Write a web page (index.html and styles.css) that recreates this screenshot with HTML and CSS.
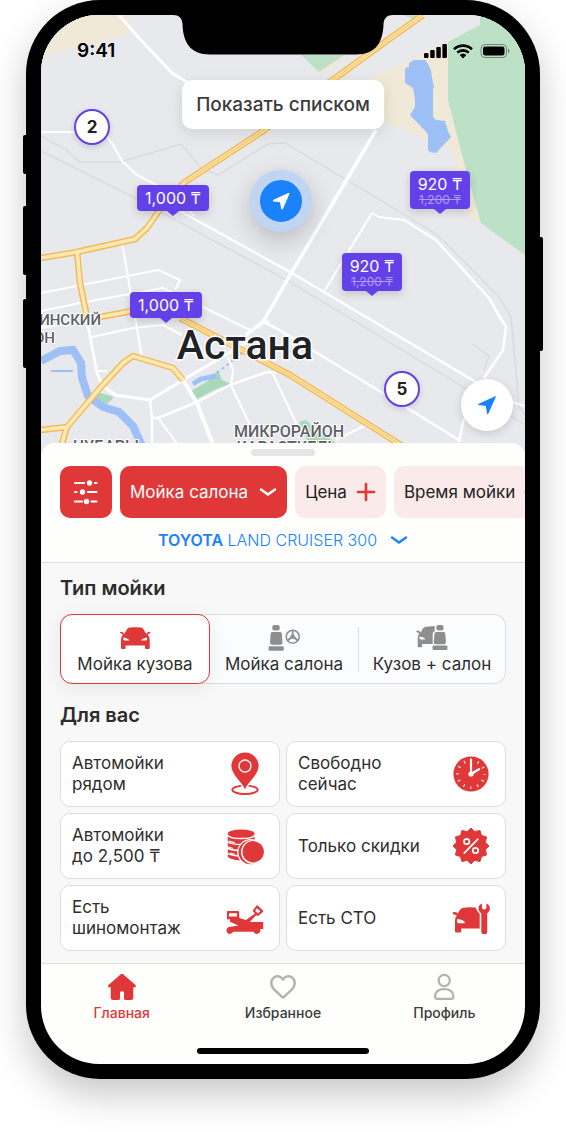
FILE: index.html
```html
<!DOCTYPE html>
<html lang="ru">
<head>
<meta charset="utf-8">
<meta name="viewport" content="width=device-width, initial-scale=1">
<title>Автомойки — Астана</title>
<link rel="stylesheet" href="styles.css">
</head>
<body>
<div class="phone">
  <span class="side-key key-mute"></span>
  <span class="side-key key-up"></span>
  <span class="side-key key-down"></span>
  <span class="side-key key-power"></span>
  <div class="screen">
    <section class="map" aria-label="Карта">
      <svg class="map-art" viewBox="41 15 484 445" preserveAspectRatio="xMidYMin slice">
        <rect x="41" y="15" width="484" height="445" fill="#e8e9ed"/>
        <path fill="#f0e9d8" d="M41 15H127L133 33 41 57ZM369 78 448 42 460 80 485 226 466 214 453 152 444 146 386 123 366 112ZM319 72 344 55H350L322 74Z"/>
        <path fill="#bce1c7" d="M480 15H525V255L504 240 481 223 466 170 448 100V42L480 25ZM301 55H344L319 72ZM403 15H421L415 20Z"/>
        <path fill="#a9d9b7" d="M191 391 208 381 218 370 222 380 231 384 216 389 197 399ZM97 392 114 397 107 404 97 399ZM299 422 306 420 314 427 336 443H308L304 432Z"/>
        <path fill="#9dc0f7" d="M405 68 409 67 409 63 414 60H425L428 64 431 70 432 78 434 87 433 89V117L436 120 445 121 448 131 451 137 436 153 430 152 428 150V134L410 115 415 107V99L413 88 405 83Z"/>
        <g fill="none" stroke="#9dc0f7">
          <path stroke-width="8" d="M41 361 60 351 73 350 81 363 82 378 88 396 103 407 119 412 133 426 142 446"/>
          <path stroke-width="2" d="M51 371H73"/>
          <path stroke-width="5" d="M193 384 201 379 216 376"/>
          <path stroke-width="2" stroke-dasharray="3 3" d="M217 373 246 350"/>
        </g>
        <g fill="none" stroke="#d9dade" stroke-width="1.4">
          <path d="M41 136 66 150 80 162H120L181 144 202 169 218 175 268 144 285 143 430 230 443 240 499 297 511 317 519 407 525 415"/>
          <path d="M41 151 135 198 290 282 465 388 525 425"/>
          <path d="M473 344 489 356 484 370"/>
        </g>
        <g fill="none" stroke="#fff" stroke-width="2" stroke-linejoin="round">
          <path stroke-width="3" d="M119 15 138 37 172 73 190 84"/>
          <path d="M41 132H75M104 132 113 145 122 161 137 175 160 187 195 216"/>
          <path stroke-width="2.5" d="M180 211 290 272 476 382"/>
          <path stroke-width="3.5" d="M376 130 317 230 293 270 263 322 246 335"/>
          <path d="M372 213 325 290M372 213 379 217 404 220"/>
          <path stroke-width="2.5" d="M404 220 436 240 489 298 506 327 503 350 484 378M464 418 459 442"/>
          <path d="M489 298 496 311 500 319"/>
          <path stroke-width="2.5" d="M263 322 276 328 386 395 459 440M262 320 270 323"/>
          <path d="M122 243 128 277 142 357M41 293 158 270 180 280 175 290M41 311 80 303 163 288 203 307 250 330M41 328 90 320M92 337 133 328 163 325 182 335"/>
          <path stroke-width="3" d="M87 320 97 373 102 385 115 395 150 400 183 380 246 343"/>
          <path stroke-width="4" d="M183 380 197 403 213 445"/>
          <path stroke-width="2.5" d="M150 400 152 418V445M152 418H158L197 402 230 385 267 372 276 373"/>
          <path d="M158 418 178 445M228 357 233 370 231 385 250 425M272 372 298 427M366 425 336 440M97 371H107M506 400 525 406"/>
        </g>
        <g fill="none" stroke-linejoin="round">
          <path stroke="#f4ba55" stroke-width="6.5" d="M423 15 385 42 330 82 260 133 185 182 165 202 147 228 135 239 77 252 41 258M77 252 80 283 87 317M100 317 132 311M180 318 290 375 366 423 404 447M41 430 67 427 100 388 123 363 133 356 173 368 183 380M67 427 61 447"/>
          <path stroke="#fee8b3" stroke-width="3.6" d="M423 15 385 42 330 82 260 133 185 182 165 202 147 228 135 239 77 252 41 258M77 250 80 283 87 318M100 317 132 311M180 318 290 375 366 423 404 447M41 430 67 427 100 388 123 363 133 356 173 368 184 381M67 426 61 447"/>
        </g>
        <path fill="none" stroke="#f4ba55" stroke-width="1" d="M423 15 385 42 330 82 260 133 185 182M180 318 290 375 366 423 404 447"/>
        <g class="map-label">
          <text x="101" y="325" text-anchor="end">ИНСКИЙ</text>
          <text x="55" y="343" text-anchor="end">ОН</text>
          <text class="map-label-wide" x="289" y="437" text-anchor="middle">МИКРОРАЙОН</text>
          <text class="map-label-wide" x="287" y="453" text-anchor="middle">КАРАСТКЕЛЬ</text>
          <text class="map-label-wide" x="106" y="452" text-anchor="middle">ЧУБАРЫ</text>
        </g>
        <text class="map-city" x="245" y="359" text-anchor="middle">Астана</text>
      </svg>

      <div class="status">
        <time>9:41</time>
        <svg class="status-icons" viewBox="0 0 86 16" aria-hidden="true">
          <g><rect x="0" y="10" width="4.500" height="5" rx="1"/><rect x="6.200" y="7" width="4.500" height="8" rx="1"/><rect x="12.300" y="4" width="4.500" height="11" rx="1"/><rect x="18.400" y="1" width="4.500" height="14" rx="1"/></g>
          <g fill="none" stroke="#000" stroke-width="2.600"><path d="M30 6.200a13.200 13.200 0 0 1 18 0M33.300 9.600a8.400 8.400 0 0 1 11.400 0"/></g>
          <path d="M39 15.400 35.700 12.100a4.800 4.800 0 0 1 6.600 0Z"/>
          <rect x="57" y="1.500" width="25.500" height="13" rx="4" fill="none" stroke="#000" stroke-opacity=".4"/>
          <rect x="59" y="3.500" width="21.500" height="9" rx="2.300"/>
          <path d="M84 5.800c2 .8 2 3.600 0 4.400Z" opacity=".45"/>
        </svg>
      </div>
      <svg class="notch" viewBox="0 0 220 40" aria-hidden="true"><path d="M0 0C6 0 9 3 9.500 9C10 27 17 39.500 37 39.500H183C203 39.500 210 27 210.500 9C211 3 214 0 220 0Z"/></svg>

      <button class="list-button" type="button">Показать списком</button>
      <button class="cluster cluster-a" type="button">2</button>
      <button class="cluster cluster-b" type="button">5</button>
      <button class="price price-a" type="button">1,000 ₸</button>
      <button class="price price-b" type="button">920 ₸<del>1,200 ₸</del></button>
      <button class="price price-c" type="button">920 ₸<del>1,200 ₸</del></button>
      <button class="price price-d" type="button">1,000 ₸</button>
      <div class="me"><svg viewBox="0 0 20 20" aria-hidden="true"><path d="M17.200 2.100 2.600 8.700c-1 .5-.9 1.700.2 1.900l6.200.7 1.100 6.300c.2 1.100 1.400 1.200 1.900.2L18.300 3.200c.3-.8-.3-1.400-1.100-1.100Z"/></svg></div>
      <button class="locate" type="button" aria-label="Моё местоположение"><svg viewBox="0 0 20 20" aria-hidden="true"><path d="M18.300 1.200 1.700 8.700c-.9.500-.8 1.200.1 1.400l7 1 1.200 7.400c.2.900.9 1 1.400.1l7.400-16.500c.3-.7.100-1.100-.5-.9Z"/></svg></button>
    </section>

    <main class="sheet">
      <div class="sheet-head">
        <span class="handle"></span>
        <div class="chips">
          <button class="chip chip-solid chip-icon" type="button" aria-label="Фильтры">
            <svg width="26" height="26" viewBox="0 0 26 26" fill="none" stroke="#fff" stroke-width="2.200" stroke-linecap="round"><path d="M2 4H11M22 4H23.500M2 13H3.500M15 13H23.500M2 22.500H9M18.500 22.500H23.500"/><g fill="#fff" stroke="none"><circle cx="16.500" cy="4" r="2.700"/><circle cx="9.500" cy="13" r="2.700"/><circle cx="13.500" cy="22.500" r="2.700"/></g></svg>
          </button>
          <button class="chip chip-solid" type="button">Мойка салона
            <svg width="18" height="10" viewBox="0 0 18 10" fill="none" stroke="#fff" stroke-width="2.600" stroke-linecap="round" stroke-linejoin="round"><path d="M2 2.500 9 7.500 16 2.500"/></svg>
          </button>
          <button class="chip" type="button">Цена
            <svg width="20" height="20" viewBox="0 0 20 20" fill="none" stroke="#e03838" stroke-width="2.600" stroke-linecap="round"><path d="M10 2V18M2 10H18"/></svg>
          </button>
          <button class="chip" type="button">Время мойки
            <svg width="20" height="20" viewBox="0 0 20 20" fill="none" stroke="#e03838" stroke-width="2.600" stroke-linecap="round"><path d="M10 2V18M2 10H18"/></svg>
          </button>
        </div>
        <button class="vehicle" type="button"><span><b>TOYOTA</b> LAND CRUISER 300</span>
          <svg width="18" height="10" viewBox="0 0 18 10" fill="none" stroke="#1a82fb" stroke-width="2.400" stroke-linecap="round" stroke-linejoin="round"><path d="M2 2.500 9 7.500 16 2.500"/></svg>
        </button>
      </div>

      <div class="content">
        <h2>Тип мойки</h2>
        <div class="segments">
          <button class="segment is-active" type="button" aria-pressed="true">
            <svg viewBox="0 0 32 26" aria-hidden="true"><path fill-rule="evenodd" d="M8.500 3.500Q9.300 2.700 11 2.500Q16.200 2 21.500 2.500Q23.200 2.700 24 3.500L27.300 9L28.200 7.500L31 6.700Q32 7 31.300 8.100L28.600 9.600Q30.800 12 30.700 15V23Q30.700 24 29.700 24H27Q26 24 26 23V20.500H6.500V23Q6.500 24 5.500 24H3Q2 24 2 23V15Q1.900 12 4 9.600L1.200 8.100Q.5 7 1.500 6.700L4.300 7.500L5.200 9ZM4.500 12.500Q3.900 15.500 5.500 15.600L10.500 15.500Q9.500 13.500 4.500 12.500ZM28 12.500Q28.600 15.500 27 15.600L22 15.500Q23 13.500 28 12.500Z"/></svg>
            Мойка кузова
          </button>
          <button class="segment" type="button" aria-pressed="false">
            <svg viewBox="0 0 32 26" aria-hidden="true"><rect x="4.300" width="7.400" height="5.500" rx="2"/><path d="M4 7H12.300Q13.600 7 13.800 8.500L14.500 17.500Q14.500 19.700 12.500 19.700H4Q1.900 19.700 2 17.500L2.700 8.500Q2.900 7 4 7Z"/><rect x=".5" y="21.300" width="15.300" height="4.500" rx="1.400"/><circle cx="24.700" cy="11.700" r="6.500" fill="none" stroke="#8e8e8e" stroke-width="1.600"/><path d="M24 5.500H25.400L25.700 9.500Q27 10.500 27.200 12L30 14.500 29 16 25.800 13.800H23.600L20.400 16 19.400 14.500 22.200 12Q22.400 10.500 23.700 9.500Z"/></svg>
            Мойка салона
          </button>
          <button class="segment has-rule" type="button" aria-pressed="false">
            <svg viewBox="0 0 32 26" aria-hidden="true"><path fill-rule="evenodd" d="M7.200 3.300Q8 2 10 1.700L18.700 1V6L16.700 8V19H6V21.500Q6 22.300 5.200 22.300H2.500Q1.700 22.300 1.700 21.500V13Q1.700 10 3.300 8.300L.6 6.900Q-.2 5.700 1 5.400L3.500 6.100 4.600 7.400ZM3.500 11.500Q3.200 14.500 4.500 14.500H9.300Q8.500 12 3.500 11.500Z"/><rect x="20.300" width="7.200" height="5.500" rx="2"/><path d="M20 7H27.800Q29 7 29.200 8.500L30 17Q30 19.200 28 19.200H19.700Q17.700 19.200 17.800 17L18.500 8.500Q18.700 7 20 7Z"/><rect x="16.500" y="20.600" width="15" height="4.500" rx="1.400"/></svg>
            Кузов + салон
          </button>
        </div>

        <h2>Для вас</h2>
        <div class="cards">
          <button class="card" type="button"><span>Автомойки<br>рядом</span>
            <svg viewBox="0 0 44 44" aria-hidden="true"><ellipse cx="22" cy="37.800" rx="12.700" ry="4.200" fill="none" stroke="#e03838" stroke-width="1.900"/><path stroke="#fff" stroke-width="1.500" d="M22-.3C14 -.3 7.600 6.200 7.600 14c0 9.500 10.200 15.500 13 22.300Q22 39.300 23.400 36.300C26.200 29.500 36.400 23.500 36.400 14 36.400 6.200 30-.3 22-.3Z"/><circle cx="22" cy="14" r="6" fill="none" stroke="#fff" stroke-width="1.300"/></svg>
          </button>
          <button class="card" type="button"><span>Свободно<br>сейчас</span>
            <svg viewBox="0 0 44 44" aria-hidden="true"><circle cx="22" cy="22" r="17.600"/><circle cx="22" cy="22" r="13.500" fill="none" stroke="#fff" stroke-width="3" stroke-dasharray="1 6.069" stroke-dashoffset=".5"/><g fill="none" stroke="#fff" stroke-linecap="round"><path stroke-width="2.200" d="M22 22V7.500"/><path stroke-width="2.400" d="M22 22 30 17.300"/></g><circle cx="22" cy="22" r="2.600" fill="#fff"/></svg>
          </button>
          <button class="card" type="button"><span>Автомойки<br>до 2,500 ₸</span>
            <svg viewBox="0 0 44 44" aria-hidden="true"><path d="M4.800 9.500V32.500Q6 35.500 18.200 36.500H31.600V9.500Z"/><path fill="#fff" d="M4 4H32.500V9.500H4Z"/><ellipse cx="18.200" cy="9.500" rx="13.400" ry="4"/><g fill="none" stroke="#fff" stroke-width="1.500"><path d="M4 10.500Q6 14.600 18.200 14.600T32.400 10.500"/><path d="M4 17.500Q8 20.500 18.200 20.500T32.400 17"/><path d="M4 24Q9 26.600 19 26.600"/><path d="M4 29.200Q9 32 19 32"/></g><g fill="none" stroke="#fff" stroke-width="1.300"><path d="M6 17.200 12 18.800M4 22.500 10 24.500M7 29 12 30.500"/></g><circle cx="27.500" cy="28.300" r="13.300" fill="#fff"/><circle cx="27.500" cy="28.300" r="12"/><circle cx="30" cy="28" r="12" fill="#fff"/><circle cx="30.200" cy="27.800" r="10.700"/></svg>
          </button>
          <button class="card" type="button"><span>Только скидки</span>
            <svg viewBox="0 0 44 44" aria-hidden="true"><path stroke="#e03838" stroke-width="1" stroke-linejoin="round" d="M22 4 25.800 7.700 31 6.400 32.500 11.500 37.600 13 36.300 18.200 40 22 36.300 25.800 37.600 31 32.500 32.500 31 37.600 25.800 36.300 22 40 18.200 36.300 13 37.600 11.500 32.500 6.400 31 7.700 25.800 4 22 7.700 18.200 6.400 13 11.500 11.500 13 6.400 18.200 7.700Z"/><g fill="none" stroke="#fff" stroke-width="1.700" stroke-linecap="round"><circle cx="17.700" cy="17.500" r="2.700"/><circle cx="26.500" cy="26.500" r="2.700"/><path d="M28.800 15.200 15.200 29.200"/></g></svg>
          </button>
          <button class="card" type="button"><span>Есть<br>шиномонтаж</span>
            <svg viewBox="0 0 44 44" aria-hidden="true"><path fill-rule="evenodd" d="M4.500 15H15Q16.200 15 16.200 16.200V22L23 24 32 17.500 29.600 15 33.500 9.600Q34.300 9 35 9.700L40 14.600Q40.600 15.300 39.800 16L34.800 20.200 33.200 19 26.800 26H40.200V33H37A3.400 3.400 0 1 1 30.600 35.800H10.200A3.500 3.500 0 1 1 6 31L15.500 29.500 7 25.800V23.300L4 23.400V16Q4 15 4.500 15ZM6 17.300V20.400H14V17.300ZM34 12.300 32.200 14.900 35 17.400 37.300 15.200Z"/></svg>
          </button>
          <button class="card" type="button"><span>Есть СТО</span>
            <svg viewBox="0 0 44 44" aria-hidden="true"><path fill-rule="evenodd" d="M10.500 14.500Q12 12 14.500 11.700Q19 10.700 26.500 11.500Q28 15.500 30.700 18V32.500H12.300V35.500Q12.300 36.500 11.200 36.500H7Q6 36.500 6 35.500V25Q6 21.500 7.800 19.500L4 18Q3.300 16.700 4.300 16L7.500 16.300 8.700 17.700ZM8.300 23Q7.500 27 9.300 27.200H16Q15.500 23.700 8.300 23Z"/><path d="M33 7.500V12.300L35.200 13.700 37.400 12.300V7.500C41.500 9.200 42.300 14.500 38.200 17.300V36Q38.200 38.200 35.300 38.200T32.300 36V17.300C28.200 14.500 28.900 9.200 33 7.500Z"/></svg>
          </button>
        </div>
      </div>
    </main>

    <nav class="tabs">
      <a class="tab is-current" href="#home" aria-current="page">
        <svg viewBox="0 0 30 30" aria-hidden="true"><path d="M13.500 2.500Q15 1.200 16.500 2.500L28.500 13Q29.800 14.700 28 15.200H26.300V25.500Q26.300 28 23.800 28H18.700Q17 28 17 26.500V20.500Q17 19.300 15 19.300T13 20.500V26.500Q13 28 11.300 28H6.200Q3.700 28 3.700 25.500V15.200H2Q.2 14.700 1.500 13Z"/></svg>
        Главная
      </a>
      <a class="tab" href="#favorites">
        <svg viewBox="0 0 30 30" aria-hidden="true" fill="none" stroke="#b3b3b3" stroke-width="2.500" stroke-linejoin="round"><path d="M15 7.500C12.500 3.500 8 3.300 5.500 5.800C2 9 3 14 6 17.300L14 24.900Q15 25.900 16 24.900L24 17.300C27 14 28 9 24.500 5.800C22 3.300 17.500 3.500 15 7.500Z"/></svg>
        Избранное
      </a>
      <a class="tab" href="#profile">
        <svg viewBox="0 0 30 30" aria-hidden="true" fill="none" stroke="#b3b3b3" stroke-width="2.300" stroke-linejoin="round"><circle cx="15.200" cy="8.500" r="5.600"/><path d="M6 24C6.500 19.500 10 17.200 15.200 17.200S24 19.500 24.400 24Q24.700 26.900 22 26.900H8.500Q5.800 26.900 6 24Z"/></svg>
        Профиль
      </a>
    </nav>
    <div class="home-bar"></div>
  </div>
</div>
</body>
</html>
```
FILE: styles.css
```css
* { box-sizing: border-box; }

body {
  margin: 0;
  padding: 0 26px 52px;
  background: #fff;
  color: #3c3c3c;
  font-family: Inter, "Liberation Sans", sans-serif;
}

button {
  margin: 0;
  border: 0;
  padding: 0;
  background: none;
  color: inherit;
  font: inherit;
  cursor: pointer;
}

svg { display: block; flex: none; }

/* Device frame */
.phone {
  position: relative;
  max-width: 600px;
  margin: 0 auto;
  padding: 15px;
  border-radius: 74px;
  background: #000;
  box-shadow: 0 16px 36px rgba(0, 0, 0, .22);
}

.side-key {
  position: absolute;
  left: -3px;
  width: 4px;
  height: 69px;
  border-radius: 2px 0 0 2px;
  background: #000;
}
.key-mute { top: 135px; height: 39px; }
.key-up { top: 206px; }
.key-down { top: 299px; }
.key-power {
  top: 237px;
  right: -3px;
  left: auto;
  height: 114px;
  border-radius: 0 2px 2px 0;
}

.screen {
  display: flex;
  flex-direction: column;
  overflow: hidden;
  border-radius: 58px;
  background: #fefefd;
}

/* Map */
.map {
  position: relative;
  height: 445px;
  overflow: hidden;
  background: #e8e9ed;
}
.map-art { width: 100%; height: 100%; }

.map-label {
  font: 500 15px Roboto, sans-serif;
  fill: #5c6066;
  stroke: #fff;
  stroke-width: 2px;
  paint-order: stroke;
}
.map-label-wide { font-size: 16px; }
.map-city {
  font: 500 41px Roboto, sans-serif;
  fill: #202226;
  stroke: #fff;
  stroke-width: 3px;
  paint-order: stroke;
}

.status {
  position: absolute;
  top: 24px;
  right: 15px;
  left: 36px;
  display: flex;
  align-items: center;
  justify-content: space-between;
  color: #000;
  font-size: 19px;
  font-weight: 600;
  line-height: 24px;
}
.status-icons { width: 86px; height: 16px; }

.notch {
  position: absolute;
  top: 0;
  left: calc(50% - 110px);
  width: 220px;
  height: 40px;
}

.list-button {
  position: absolute;
  top: 65px;
  left: 50%;
  padding: 0 14px;
  border-radius: 10px;
  background: #fff;
  box-shadow: 0 4px 16px rgba(0, 0, 0, .1);
  font-size: 19px;
  font-weight: 500;
  line-height: 49px;
  white-space: nowrap;
  transform: translateX(-50%);
}

.cluster {
  position: absolute;
  width: 36px;
  height: 36px;
  border: 2px solid #6340e8;
  border-radius: 50%;
  background: #fff;
  box-shadow: 0 2px 6px rgba(0, 0, 0, .14);
  color: #222;
  font-size: 17px;
  font-weight: 700;
}
.cluster-a { top: 94px; left: calc(50% - 209px); }
.cluster-b { top: 356px; left: calc(50% + 101px); }

.price {
  position: absolute;
  width: 72px;
  padding: 3px 0;
  border-radius: 4px;
  background: #6340e8;
  box-shadow: 0 3px 8px rgba(0, 0, 0, .16);
  color: #fff;
  font-size: 16px;
  line-height: 20px;
  text-align: center;
}
.price::after {
  content: "";
  position: absolute;
  top: 100%;
  left: calc(50% - 6px);
  border: 6px solid transparent;
  border-top: 5px solid #6340e8;
  border-bottom: 0;
}
.price del {
  display: block;
  color: #b09ef4;
  font-size: 12px;
  line-height: 12px;
}
.price-a { top: 170px; left: calc(50% - 146px); }
.price-b { top: 156px; left: calc(50% + 127px); width: 60px; }
.price-c { top: 238px; left: calc(50% + 59px); width: 60px; }
.price-d { top: 277px; left: calc(50% - 153px); }

.me {
  position: absolute;
  top: 155px;
  left: calc(50% - 33px);
  display: grid;
  place-items: center;
  width: 62px;
  height: 62px;
  border: 10px solid #c0d5f2;
  border-radius: 50%;
  background: #1a82fb;
  box-shadow: 0 8px 24px rgba(0, 0, 0, .2);
}
.me svg { width: 20px; height: 20px; fill: #fff; }

.locate {
  position: absolute;
  top: 364px;
  right: 12px;
  display: grid;
  place-items: center;
  width: 52px;
  height: 52px;
  border-radius: 50%;
  background: #fff;
  box-shadow: 0 2px 8px rgba(0, 0, 0, .16);
}
.locate svg { width: 20px; height: 20px; fill: #1a82fb; }

/* Sheet */
.sheet {
  position: relative;
  margin-top: -17px;
  overflow: hidden;
  border-radius: 14px 14px 0 0;
  background: #fefefd;
}
.sheet-head {
  display: flex;
  flex-direction: column;
  align-items: center;
  padding-top: 6px;
  border-bottom: 1px solid #dcdcdc;
}
.handle {
  width: 64px;
  height: 7px;
  border-radius: 4px;
  background: #e5e5e5;
}

.chips {
  display: flex;
  gap: 8px;
  width: 100%;
  margin-top: 10px;
  padding-left: 19px;
  overflow: hidden;
}
.chip {
  display: flex;
  flex: none;
  align-items: center;
  justify-content: center;
  gap: 9px;
  height: 52px;
  padding: 0 10px;
  border-radius: 10px;
  background: #fbeaea;
  color: #222;
  font-size: 17px;
  font-weight: 400;
}
.chip-solid { gap: 11px; background: #e03838; color: #fff; }
.chip-icon { width: 52px; }

.vehicle {
  display: flex;
  align-items: center;
  gap: 13px;
  color: #1a82fb;
  font-size: 16px;
  font-weight: 300;
  line-height: 44px;
}
.vehicle b { font-weight: 600; }

.content {
  padding: 13px 19px 12px;
  background: #f8f8f8;
}
h2 {
  margin: 0 0 14px;
  color: #2c2c2c;
  font-size: 20px;
  font-weight: 600;
  line-height: 24px;
}

.segments {
  display: flex;
  margin-bottom: 19px;
  border-radius: 12px;
  background: #fbfcfe;
  box-shadow: inset 0 0 0 1px #dcdee0;
}
.segment {
  position: relative;
  display: flex;
  flex: 1;
  flex-direction: column;
  align-items: center;
  gap: 2px;
  height: 70px;
  padding-top: 11px;
  color: #2e2e2e;
  font-size: 17px;
  font-weight: 400;
  line-height: 23px;
  white-space: nowrap;
}
.segment svg { width: 32px; height: 26px; fill: #8e8e8e; }
.segment.is-active {
  padding-top: 10px;
  border: 1px solid #e03838;
  border-radius: 12px;
  background: #fff;
  box-shadow: 0 4px 20px rgba(0, 0, 0, .07);
}
.segment.is-active svg { fill: #e03838; }
.segment.has-rule::before {
  content: "";
  position: absolute;
  top: 13px;
  bottom: 13px;
  left: 0;
  width: 1px;
  background: #dcdee0;
}

.cards {
  display: grid;
  grid-template-columns: 1fr 1fr;
  gap: 6px;
}
.card {
  display: flex;
  align-items: center;
  justify-content: space-between;
  height: 66px;
  padding: 0 12px 0 11px;
  border: 1px solid #dedede;
  border-radius: 10px;
  background: #fff;
  color: #2e2e2e;
  font-size: 17px;
  font-weight: 400;
  line-height: 21px;
  text-align: left;
}
.card svg { width: 44px; height: 44px; fill: #e03838; }

/* Bottom navigation */
.tabs {
  display: flex;
  padding-top: 8px;
  border-top: 1px solid #dedede;
}
.tab {
  display: flex;
  flex: 1;
  flex-direction: column;
  align-items: center;
  gap: 1px;
  color: #3c3c3c;
  font-size: 14px;
  font-weight: 500;
  line-height: 20px;
  text-decoration: none;
}
.tab svg { width: 30px; height: 30px; }
.tab.is-current { color: #e03838; fill: #e03838; }

.home-bar {
  width: 172px;
  height: 6px;
  margin: 25px auto 10px;
  border-radius: 3px;
  background: #000;
}
```
